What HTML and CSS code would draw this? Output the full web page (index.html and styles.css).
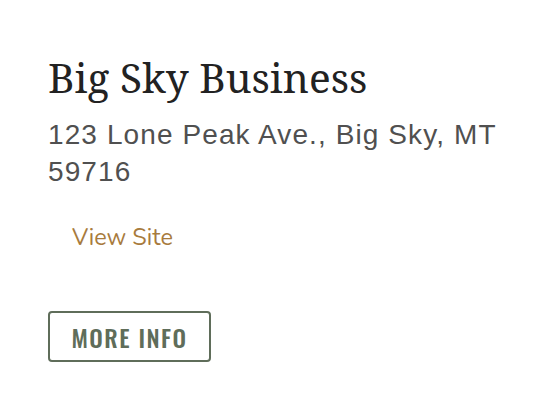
FILE: index.html
```html
<!DOCTYPE html>
<html lang="en">
<head>
    <meta charset="UTF-8">
    <meta name="viewport" content="width=device-width, initial-scale=1.0">
    <title>Big Sky Business</title>
    <link rel="stylesheet" href="styles.css">
</head>
<body>

<div class="listing">
    <h2 class="listing-name">Big Sky Business</h2>
    <p class="listing-address">123 Lone Peak Ave., Big Sky, MT 59716</p>
    <a class="listing-link" href="#">View Site</a>
    <a class="more-btn" href="#">More Info</a>
</div>

</body>
</html>
```

FILE: styles.css
```css
* {
    margin: 0;
    padding: 0;
    box-sizing: border-box;
}

body {
    background: #ffffff;
    font-family: 'Liberation Sans', Arial, sans-serif;
}

.listing {
    padding: 53px 30px 0 48px;
    display: flex;
    flex-direction: column;
    align-items: flex-start;
}

.listing-name {
    font-family: 'Noto Serif', 'DejaVu Serif', serif;
    font-weight: normal;
    font-size: 40.6px;
    line-height: 49px;
    color: #222222;
}

.listing-address {
    margin-top: 14px;
    font-size: 28px;
    line-height: 37px;
    letter-spacing: 1.1px;
    color: #505050;
}

.listing-link {
    margin: 31px 0 0 24px;
    font-family: 'Nunito', 'Lato', sans-serif;
    font-size: 23.5px;
    line-height: 32px;
    color: #a87b3d;
    text-decoration: none;
}

.more-btn {
    margin-top: 58px;
    width: 163px;
    height: 51px;
    display: flex;
    justify-content: center;
    align-items: center;
    border: 2px solid #5f6d5a;
    border-radius: 4px;
    font-family: 'Oswald', 'DejaVu Sans', sans-serif;
    font-weight: 500;
    font-size: 24px;
    letter-spacing: 1.5px;
    text-transform: uppercase;
    color: #5f6d5a;
    text-decoration: none;
}
```
